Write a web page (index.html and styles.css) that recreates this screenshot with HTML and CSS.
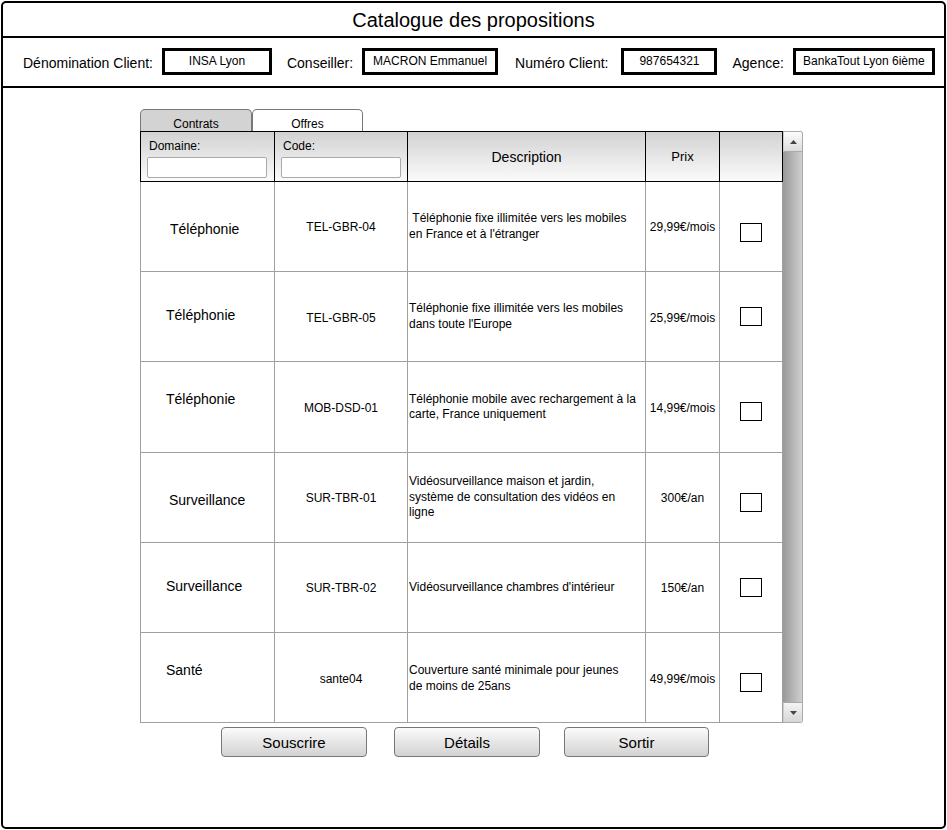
FILE: index.html
```html
<!DOCTYPE html>
<html lang="fr">
<head>
<meta charset="utf-8">
<title>Catalogue des propositions</title>
<link rel="stylesheet" href="styles.css">
</head>
<body>
<div class="frame">
  <div class="title">Catalogue des propositions</div>
  <div class="info">
    <span class="lbl l1">Dénomination Client:</span><span class="box b1">INSA Lyon</span>
    <span class="lbl l2">Conseiller:</span><span class="box b2">MACRON Emmanuel</span>
    <span class="lbl l3">Numéro Client:</span><span class="box b3">987654321</span>
    <span class="lbl l4">Agence:</span><span class="box b4">BankaTout Lyon 6ième</span>
  </div>
  <div class="content">
    <div class="tabs">
      <div class="tab tab-off">Contrats</div>
      <div class="tab tab-on">Offres</div>
    </div>
    <div class="tablewrap">
      <div class="grid">
        <div class="th th-filter first"><span class="flabel">Domaine:</span><span class="finput"></span></div>
        <div class="th th-filter"><span class="flabel">Code:</span><span class="finput"></span></div>
        <div class="th">Description</div>
        <div class="th th-small">Prix</div>
        <div class="th"></div>

        <div class="td dom first dn4 px4">Téléphonie</div>
        <div class="td code">TEL-GBR-04</div>
        <div class="td desc">&nbsp;Téléphonie fixe illimitée vers les mobiles<br>en France et à l'étranger</div>
        <div class="td price">29,99€/mois</div>
        <div class="td chk dn11"><span class="cb"></span></div>

        <div class="td dom first up4">Téléphonie</div>
        <div class="td code dn2">TEL-GBR-05</div>
        <div class="td desc">Téléphonie fixe illimitée vers les mobiles<br>dans toute l'Europe</div>
        <div class="td price dn2">25,99€/mois</div>
        <div class="td chk"><span class="cb"></span></div>

        <div class="td dom first up16">Téléphonie</div>
        <div class="td code dn2">MOB-DSD-01</div>
        <div class="td desc">Téléphonie mobile avec rechargement à la<br>carte, France uniquement</div>
        <div class="td price dn2">14,99€/mois</div>
        <div class="td chk dn8"><span class="cb"></span></div>

        <div class="td dom first dn4 px3">Surveillance</div>
        <div class="td code">SUR-TBR-01</div>
        <div class="td desc">Vidéosurveillance maison et jardin,<br>système de consultation des vidéos en<br>ligne</div>
        <div class="td price">300€/an</div>
        <div class="td chk dn10"><span class="cb"></span></div>

        <div class="td dom first up4">Surveillance</div>
        <div class="td code">SUR-TBR-02</div>
        <div class="td desc">Vidéosurveillance chambres d'intérieur</div>
        <div class="td price">150€/an</div>
        <div class="td chk"><span class="cb"></span></div>

        <div class="td dom first up16">Santé</div>
        <div class="td code dn2">sante04</div>
        <div class="td desc dn2">Couverture santé minimale pour jeunes<br>de moins de 25ans</div>
        <div class="td price dn2">49,99€/mois</div>
        <div class="td chk dn10"><span class="cb"></span></div>
      </div>
      <div class="scroll">
        <div class="sbtn up"><svg width="7" height="4" viewBox="0 0 7 4"><polygon points="0,4 7,4 3.5,0" fill="#444"/></svg></div>
        <div class="track"></div>
        <div class="sbtn down"><svg width="7" height="4" viewBox="0 0 7 4"><polygon points="0,0 7,0 3.5,4" fill="#444"/></svg></div>
      </div>
    </div>
    <div class="buttons">
      <button class="btn bt1">Souscrire</button>
      <button class="btn bt2">Détails</button>
      <button class="btn bt3">Sortir</button>
    </div>
  </div>
</div>
</body>
</html>
```
FILE: styles.css
```css
* { box-sizing: border-box; }
html, body { margin: 0; padding: 0; background: #fff; }
body { font-family: "Liberation Sans", Arial, sans-serif; color: #000; }

.frame {
  margin: 1px 0 0 1px;
  width: 945px;
  height: 828px;
  border: 2px solid #000;
  border-radius: 5px;
}

.title {
  height: 35px;
  border-bottom: 2px solid #000;
  font-size: 20px;
  text-align: center;
  line-height: 34px;
  padding-left: 0;
}

.info {
  height: 50px;
  border-bottom: 2px solid #000;
  display: flex;
  align-items: center;
  font-size: 14px;
  padding-left: 20px;
}
.lbl { white-space: nowrap; margin-top: 2px; }
.box {
  border: 3px solid #000;
  height: 27px;
  font-size: 12px;
  display: flex;
  align-items: center;
  justify-content: center;
  white-space: nowrap;
  margin-left: 9px;
  margin-top: -1px;
  padding-bottom: 2px;
}
.b1 { width: 110px; }
.b2 { width: 136px; margin-left: 9px; }
.b3 { width: 96px; margin-left: 13px; }
.b4 { width: 142px; margin-left: 9px; }
.l2 { margin-left: 15px; }
.l3 { margin-left: 17px; }
.l4 { margin-left: 15px; }

.content { padding-left: 137px; }

.tabs { display: flex; margin-top: 21px; height: 22px; }
.tab {
  height: 22px;
  border: 1px solid #777;
  border-bottom: none;
  border-radius: 5px 5px 0 0;
  font-size: 12px;
  text-align: center;
  padding-top: 7px;
  line-height: 14px;
}
.tab-off { width: 112px; background: #d3d3d3; }
.tab-on { width: 111px; background: #fff; }

.tablewrap { display: flex; }
.grid {
  display: grid;
  grid-template-columns: 135px 133px 238px 74px 63px;
  grid-template-rows: 51px 90px 90px 91px 90px 90px 90px;
  width: 643px;
}
.th {
  background: linear-gradient(#d2d2d2, #fbfbfb);
  border-top: 1px solid #000;
  border-bottom: 1px solid #000;
  border-right: 1px solid #000;
  display: flex;
  align-items: center;
  justify-content: center;
  font-size: 14px;
}
.th.first { border-left: 1px solid #000; }
.th-small { font-size: 13px; }
.th-filter {
  flex-direction: column;
  align-items: flex-start;
  justify-content: flex-start;
  padding: 7px 0 0 6px;
}
.flabel { font-size: 12px; line-height: 14px; padding-left: 2px; }
.finput {
  display: block;
  width: 120px;
  height: 21px;
  margin-top: 4px;
  border: 1px solid #aaa;
  border-radius: 2px;
  background: #fff;
}

.td {
  border-right: 1px solid #a0a0a0;
  border-bottom: 1px solid #a0a0a0;
  display: flex;
  align-items: center;
  font-size: 12px;
}
.td.first { border-left: 1px solid #a0a0a0; }
.dom { font-size: 14px; padding-left: 25px; }
.dom.px4 { padding-left: 29px; }
.dom.px3 { padding-left: 28px; }
.code { justify-content: center; }
.desc { padding-left: 1px; line-height: 15.5px; }
.price { justify-content: center; white-space: nowrap; }
.chk { justify-content: center; }
.cb { width: 22px; height: 19px; border: 1px solid #000; background: #fff; }

.dn2 { padding-top: 2px; }
.dn4 { padding-top: 4px; }
.dn8 { padding-top: 8px; }
.dn10 { padding-top: 10px; }
.dn11 { padding-top: 11px; }
.up4 { padding-bottom: 4px; }
.up16 { padding-bottom: 16px; }

.scroll {
  width: 20px;
  height: 592px;
  border: 1px solid #aaa;
  border-left: none;
  border-radius: 0 3px 3px 0;
  display: flex;
  flex-direction: column;
  background: #fff;
}
.sbtn {
  height: 20px;
  background: linear-gradient(#fdfdfd, #dcdcdc);
  display: flex;
  align-items: center;
  justify-content: center;
  border-left: 1px solid #ccc;
}
.sbtn.up { border-bottom: 1px solid #aaa; border-radius: 0 3px 0 0; }
.sbtn.down { border-top: 1px solid #aaa; border-radius: 0 0 3px 0; background: linear-gradient(#f4f4f4, #d6d6d6); }
.track { flex: 1; background: linear-gradient(to right, #999, #b4b4b4 50%, #cfcfcf); }

.buttons { display: flex; margin-top: 4px; }
.btn {
  width: 146px;
  height: 30px;
  border: 1px solid #777;
  border-radius: 4px;
  background: linear-gradient(#fbfbfb, #d2d2d2);
  font-family: "Liberation Sans", Arial, sans-serif;
  font-size: 15px;
  color: #000;
  padding: 0;
}
.bt1 { margin-left: 81px; }
.bt2 { margin-left: 27px; }
.bt3 { margin-left: 24px; width: 145px; }
```
